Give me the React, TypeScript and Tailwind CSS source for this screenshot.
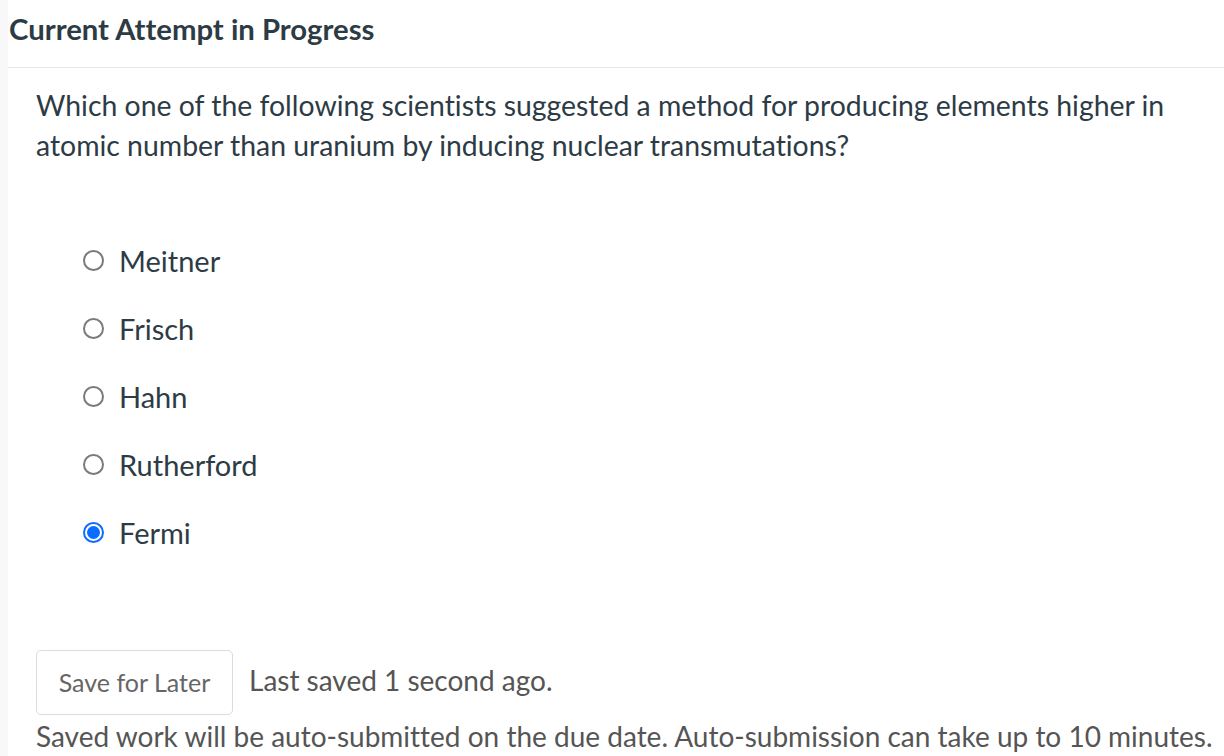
import React from "react";

const options = ["Meitner", "Frisch", "Hahn", "Rutherford", "Fermi"];

function Radio({ checked }: { checked: boolean }) {
  if (checked) {
    return (
      <span className="flex h-[21px] w-[21px] shrink-0 items-center justify-center rounded-full border-[2px] border-[#0b6cff] bg-white">
        <span className="h-[13px] w-[13px] rounded-full bg-[#0b6cff]" />
      </span>
    );
  }
  return <span className="h-[21px] w-[21px] shrink-0 rounded-full border-[2px] border-[#7a7a7a] bg-white" />;
}

export default function App() {
  return (
    <div
      className="flex h-[756px] w-[1224px] overflow-hidden bg-white [font-variant-ligatures:none]"
      style={{ fontFamily: "Lato, 'Open Sans', sans-serif" }}
    >
      <div className="w-[8px] shrink-0 bg-[#f8f8f8]" />
      <div className="flex min-w-0 flex-1 flex-col">
        <div className="h-[69px] border-b border-[#e8e8e8] pl-[1px] pt-[12px]">
          <h1 className="text-[29.3px] font-bold leading-[34px] text-[#2d3b45]">Current Attempt in Progress</h1>
        </div>
        <div className="px-[28px] pt-[17px]">
          <p className="text-[28.4px] leading-[40px] text-[#2d3b45]">
            Which one of the following scientists suggested a method for producing elements higher in atomic number than uranium by inducing nuclear transmutations?
          </p>
          <div className="mt-[78px] flex flex-col gap-[33px] pl-[47px]">
            {options.map((o, i) => (
              <label key={o} className="flex h-[35px] items-center gap-[15px]">
                <Radio checked={i === 4} />
                <span className="text-[29px] leading-none text-[#2d3b45]">{o}</span>
              </label>
            ))}
          </div>
          <div className="mt-[100px] flex items-center gap-[16px]">
            <button className="h-[65px] w-[197px] rounded-[5px] border border-[#dcdcdc] bg-white text-[25px] text-[#666]">
              Save for Later
            </button>
            <span className="-mt-[5px] text-[28px] text-[#555]">Last saved 1 second ago.</span>
          </div>
          <p className="mt-[1px] whitespace-nowrap text-[28px] leading-[40px] text-[#555]">
            Saved work will be auto-submitted on the due date. Auto-submission can take up to 10 minutes.
          </p>
        </div>
      </div>
    </div>
  );
}
